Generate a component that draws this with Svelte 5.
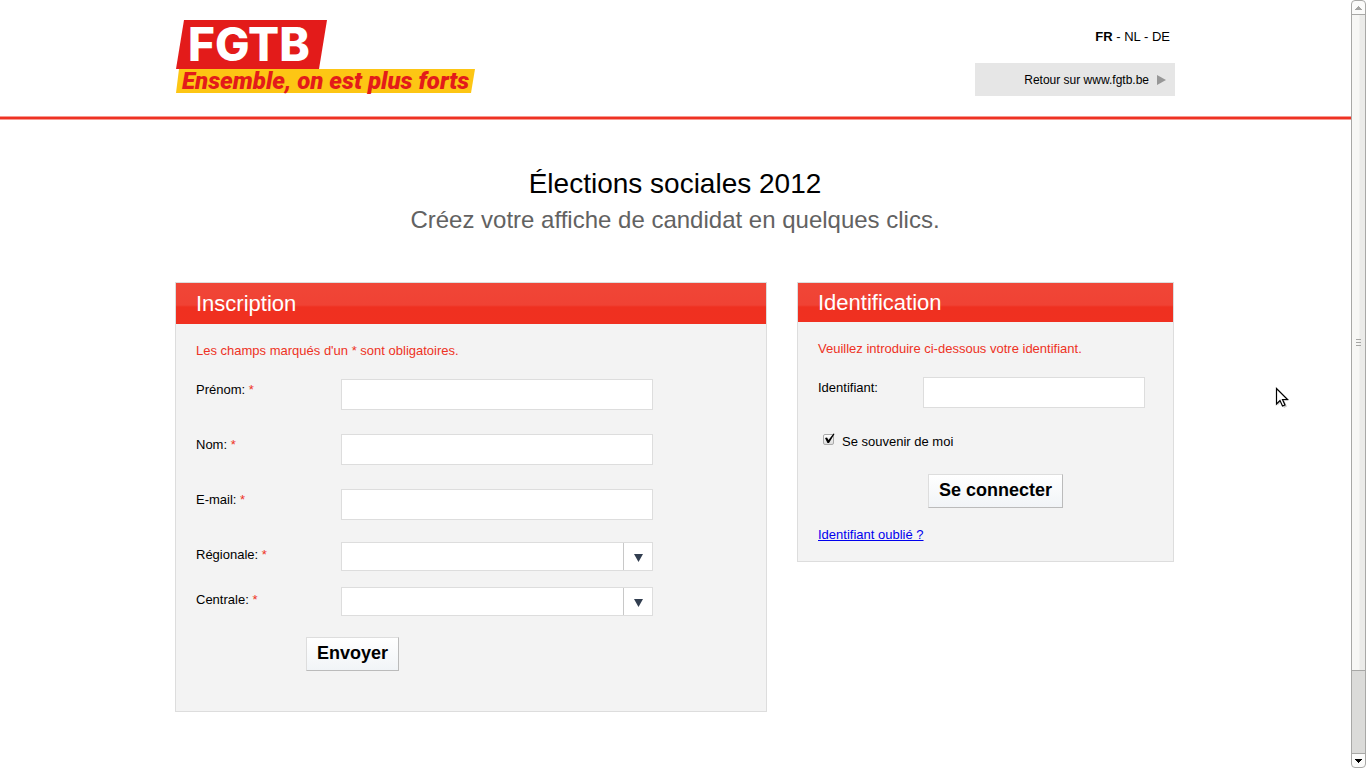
<script>
  const textFields = [
    { id: 'prenom', label: 'Prénom:', type: 'text' },
    { id: 'nom', label: 'Nom:', type: 'text' },
    { id: 'email', label: 'E-mail:', type: 'email' }
  ];
  const selectFields = [
    { id: 'regionale', label: 'Régionale:' },
    { id: 'centrale', label: 'Centrale:' }
  ];
  let remember = $state(true);
</script>

<div class="window">
  <div class="page">
    <header>
      <div class="wrap top">
        <a class="logo" href="#accueil">
          <svg width="300" height="74" viewBox="0 0 300 74">
            <path d="M4 49H300L296 73H1Z" fill="#fdc614" />
            <path d="M9 0H152L144 49H1Z" fill="#e31b1a" />
            <text class="brand" x="13" y="41">FGTB</text>
            <text class="tagline" x="7" y="69">Ensemble, on est plus forts</text>
          </svg>
        </a>
        <div class="tools">
          <nav><b>FR</b> - <a href="#nl">NL</a> - <a href="#de">DE</a></nav>
          <a class="back" href="#retour">
            Retour sur www.fgtb.be
            <svg width="9" height="10" viewBox="0 0 9 10"><path d="M0 0L9 5L0 10Z" fill="#979797" /></svg>
          </a>
        </div>
      </div>
    </header>

    <main class="wrap">
      <h1>Élections sociales 2012</h1>
      <p class="subtitle">Créez votre affiche de candidat en quelques clics.</p>

      <div class="panels">
        <section class="panel signup">
          <h2>Inscription</h2>
          <form>
            <p class="notice">Les champs marqués d'un * sont obligatoires.</p>
            <div class="group texts">
              {#each textFields as f}
                <div class="field">
                  <label for={f.id}>{f.label} <span>*</span></label>
                  <input class="text" id={f.id} type={f.type} />
                </div>
              {/each}
            </div>
            <div class="group selects">
              {#each selectFields as f}
                <div class="field">
                  <label for={f.id}>{f.label} <span>*</span></label>
                  <div class="select">
                    <select id={f.id}><option></option></select>
                    <svg width="30" height="27" viewBox="0 0 30 27">
                      <path d="M0.5 0V27" stroke="#c8c8c8" />
                      <path d="M11 11H20L15.5 19Z" fill="#323e50" />
                    </svg>
                  </div>
                </div>
              {/each}
            </div>
            <button type="button">Envoyer</button>
          </form>
        </section>

        <section class="panel login">
          <h2>Identification</h2>
          <form>
            <p class="notice">Veuillez introduire ci-dessous votre identifiant.</p>
            <div class="field">
              <label for="identifiant">Identifiant:</label>
              <input class="text" id="identifiant" type="text" />
            </div>
            <label class="remember">
              <span class="check">
                <input type="checkbox" bind:checked={remember} />
                {#if remember}
                  <svg width="12" height="13" viewBox="0 0 12 13">
                    <path d="M2 5L4 4.5L5.5 7L10.5 0.5L11.5 1L6 10H4.5Z" fill="#000" />
                  </svg>
                {/if}
              </span>
              Se souvenir de moi
            </label>
            <button type="button">Se connecter</button>
            <a class="forgot" href="#oubli">Identifiant oublié ?</a>
          </form>
        </section>
      </div>
    </main>
  </div>

  <div class="scrollbar" aria-hidden="true">
    <div class="arrow up">
      <svg width="7" height="4" viewBox="0 0 7 4" shape-rendering="crispEdges"><path d="M3 0h1v1h1v1h1v1h1v1H0V3h1V2h1V1h1Z" fill="#a5a5a3" /></svg>
    </div>
    <div class="thumb"><i></i><i></i><i></i></div>
    <div class="track"></div>
    <div class="arrow down">
      <svg width="7" height="4" viewBox="0 0 7 4" shape-rendering="crispEdges"><path d="M0 0h7v1H6v1H5v1H4v1H3V3H2V2H1V1H0Z" fill="#000" /></svg>
    </div>
  </div>

  <svg class="cursor" width="16" height="23" viewBox="0 0 16 23" aria-hidden="true">
    <path d="M2.5 3L2.5 18.5L6 15L9 21L12 19.5L9.5 14H14Z" fill="#000" opacity="0.2" />
    <path d="M1.5 1.5V17L5 13.5L7.5 19L10 18L7.5 12.5H12.5Z" fill="#fff" stroke="#000" stroke-width="1.2" />
  </svg>
</div>

<style>
  :global(body) {
    background: #fff;
    color: #000;
    font-family: "Liberation Sans", Arial, sans-serif;
    font-size: 13px;
    line-height: 16px;
  }
  h1, h2, p { margin: 0; font-weight: normal; }
  .window { display: flex; position: relative; }
  .page { flex: 1; min-width: 0; }
  .wrap { max-width: 1000px; margin: 0 auto; }

  header {
    border-bottom: 2px solid #ee3224;
    box-shadow: 0 1px #f79a92, inset 0 -1px #f79a92;
  }
  .top { display: flex; justify-content: space-between; align-items: flex-start; padding: 20px 1px 21px 0; }
  .logo, .logo svg { display: block; overflow: visible; }
  .logo { margin-bottom: 2px; }
  .brand { font: 800 46px Inter, sans-serif; fill: #fff; }
  .tagline { font: italic 900 24px Roboto, sans-serif; fill: #e31b1a; }
  .tools { width: 200px; }
  nav { padding: 9px 5px 18px 0; text-align: right; }
  nav a { color: inherit; text-decoration: none; }
  .back {
    display: flex;
    justify-content: flex-end;
    align-items: center;
    gap: 8px;
    padding: 9px 9px 8px;
    background: #e6e6e6;
    color: #000;
    font-size: 12px;
    text-decoration: none;
  }

  main { padding: 47px 1px 56px 0; text-align: center; }
  h1 { font-size: 28px; line-height: 36px; }
  .subtitle { font-size: 24px; line-height: 36px; color: #626262; }
  .panels {
    display: grid;
    grid-template-columns: minmax(0, 592fr) minmax(0, 377fr);
    gap: 30px;
    align-items: start;
    padding: 44px 1px 0 0;
    text-align: left;
  }
  .panel { border: 1px solid #ddd; background: #f3f3f3; }
  h2 {
    padding: 0 20px;
    background: linear-gradient(#f04637, #f04234 22px, #ef3020 24px, #f03020);
    color: #fff;
    font-size: 22px;
    line-height: 41px;
  }
  .login h2 { line-height: 39px; }
  form { padding: 19px 20px 40px; }
  .login form { padding-bottom: 18px; }
  .notice { margin-bottom: 20px; color: #ee3224; }
  .group { display: grid; }
  .texts { gap: 24px; margin-bottom: 22px; }
  .selects { gap: 16px; }
  .field { display: grid; grid-template-columns: 145px minmax(0, 312px); align-items: start; }
  .login .field { grid-template-columns: 105px minmax(0, 222px); }
  .field label { padding-top: 3px; }
  .selects label { padding-top: 5px; }
  .field span { color: #ee3224; }
  .text, select {
    box-sizing: border-box;
    width: 100%;
    height: 31px;
    padding: 0 8px;
    border: 1px solid #ddd;
    border-radius: 0;
    background: #fff;
    font: inherit;
  }
  .select { position: relative; }
  select { display: block; height: 29px; appearance: none; }
  .select svg { position: absolute; top: 1px; right: 0; pointer-events: none; }
  button {
    display: block;
    height: 34px;
    margin: 21px 0 0 110px;
    padding: 0 10px 2px;
    border: 1px solid #ddd;
    border-right-color: #bbb;
    border-bottom-color: #bbb;
    background: linear-gradient(#fff, #f1f4f7);
    color: #000;
    font: bold 18px "Liberation Sans", Arial, sans-serif;
  }
  .remember { display: flex; gap: 8px; margin: 26px 0 24px; padding-left: 5px; }
  .check { position: relative; width: 11px; }
  .check input {
    display: block;
    appearance: none;
    width: 11px;
    height: 11px;
    margin: 0;
    border: 1px solid #aaa;
    border-radius: 2px;
    background: linear-gradient(#fff, #ddd);
  }
  .check svg { position: absolute; top: -1px; left: 0; pointer-events: none; }
  .forgot { display: inline-block; margin-top: 19px; color: #00e; }

  .scrollbar {
    position: sticky;
    top: 0;
    display: flex;
    flex-direction: column;
    box-sizing: border-box;
    width: 15px;
    height: 100vh;
    border: 1px solid #a8a8a6;
    border-radius: 4px;
    background: #fbfbfa;
  }
  .arrow { display: flex; height: 13px; align-items: center; justify-content: center; }
  .thumb {
    flex: 655;
    display: flex;
    flex-direction: column;
    align-items: center;
    justify-content: center;
    gap: 2px;
    border: solid #a8a8a6;
    border-width: 1px 0;
    background: linear-gradient(90deg, #f7f7f5 7px, #ebebe9 8px);
  }
  .thumb i { width: 5px; height: 1px; background: #a5a5a3; }
  .track { flex: 82; border-bottom: 1px solid #a8a8a6; background: #dbdbd9; }
  .cursor { position: absolute; left: 1275px; top: 387px; pointer-events: none; }
</style>
